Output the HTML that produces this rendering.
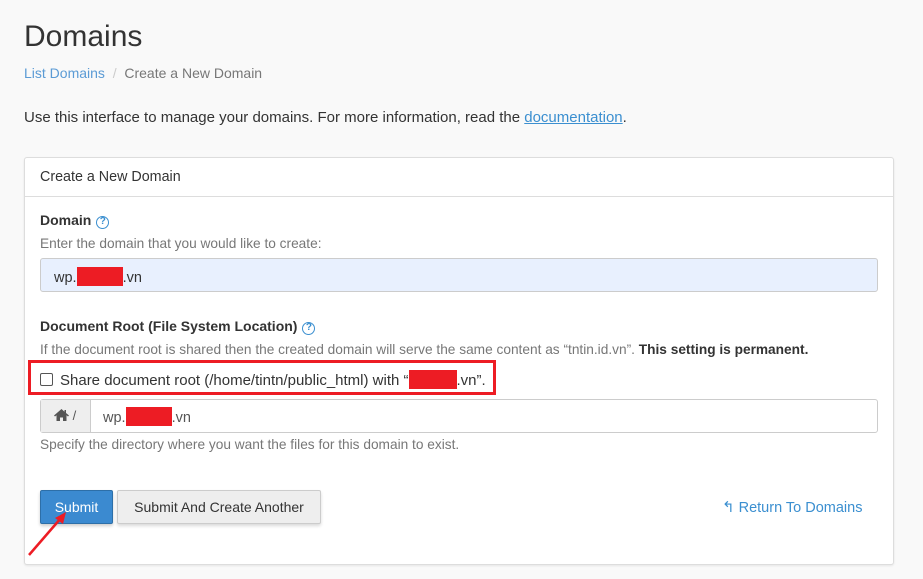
<!DOCTYPE html>
<html><head><meta charset="utf-8"><style>
*{box-sizing:border-box;margin:0;padding:0}
body{width:923px;height:579px;background:#f9f9f9;font-family:"Liberation Sans",sans-serif;color:#333;position:relative;overflow:hidden}
.a{position:absolute;white-space:nowrap}
.q{display:inline-block;width:13px;height:13px;border:1.5px solid #3b8fd0;border-radius:50%;color:#3b8fd0;font-size:10px;line-height:10px;text-align:center;font-weight:bold;vertical-align:1px;margin-left:5px}
.red{display:inline-block;background:#ed1c24;height:19px;vertical-align:-4px}
</style></head><body>
<div class="a" style="left:24px;top:20px;font-size:30px;color:#333">Domains</div>
<div class="a" style="left:24px;top:65px;font-size:14px;color:#777"><span style="color:#5b9bd5">List Domains</span> <span style="color:#ccc">&nbsp;/&nbsp;</span> Create a New Domain</div>
<div class="a" style="left:24px;top:109px;font-size:15px;color:#333">Use this interface to manage your domains. For more information, read the <span style="color:#3b8fd0;text-decoration:underline">documentation</span>.</div>
<div class="a" style="left:24px;top:157px;width:870px;height:408px;background:#fff;border:1px solid #ddd;border-radius:3px;box-shadow:0 1px 2px rgba(0,0,0,.08)"></div>
<div class="a" style="left:25px;top:196px;width:868px;border-top:1px solid #ddd"></div>
<div class="a" style="left:40px;top:169px;font-size:14.3px;color:#333">Create a New Domain</div>
<div class="a" style="left:40px;top:212px;font-size:14px;font-weight:bold;color:#333">Domain<span class="q">?</span></div>
<div class="a" style="left:40px;top:236px;font-size:13.7px;color:#777">Enter the domain that you would like to create:</div>
<div class="a" style="left:40px;top:258px;width:838px;height:34px;background:#e8f0fe;border:1px solid #ccc;border-radius:3px;font-size:14.5px;padding:8px 13px">wp.<span class="red" style="width:46px"></span>.vn</div>
<div class="a" style="left:40px;top:318px;font-size:14px;font-weight:bold;color:#333">Document Root (File System Location)<span class="q">?</span></div>
<div class="a" style="left:40px;top:342px;font-size:13.7px;color:#777">If the document root is shared then the created domain will serve the same content as “tntin.id.vn”. <b style="color:#333">This setting is permanent.</b></div>
<div class="a" style="left:28px;top:360px;width:468px;height:35px;border:3px solid #ed1c24"></div>
<div class="a" style="left:40px;top:373px;width:13px;height:13px;border:1px solid #555;border-radius:2px;background:#fff"></div>
<div class="a" style="left:60px;top:370px;font-size:15px;color:#333">Share document root (/home/tintn/public_html) with “<span class="red" style="width:48px"></span>.vn”.</div>
<div class="a" style="left:40px;top:399px;width:838px;height:34px;border:1px solid #ccc;border-radius:3px;background:#fff"></div>
<div class="a" style="left:41px;top:400px;width:50px;height:32px;background:#eee;border-right:1px solid #ccc;font-size:13px;color:#555;padding:8px 0 0 13px"><svg width="15" height="12" viewBox="0 0 15 12" style="vertical-align:-1px"><path d="M7.5 0L0 6.5 1 7.5 2.5 6.2V12H6V8.5H9V12H12.5V6.2L14 7.5 15 6.5 12 4V1H10.5V2.7Z" fill="#555"/></svg> /</div>
<div class="a" style="left:103px;top:407px;font-size:14.5px;color:#555">wp.<span class="red" style="width:46px"></span>.vn</div>
<div class="a" style="left:40px;top:437px;font-size:13.7px;color:#777">Specify the directory where you want the files for this domain to exist.</div>
<div class="a" style="left:40px;top:490px;width:73px;height:34px;background:#3b8ad0;border:1px solid #2d6fa8;border-radius:2px;color:#fff;font-size:14px;text-align:center;line-height:32px;box-shadow:0 2px 3px rgba(0,0,0,.2)">Submit</div>
<div class="a" style="left:117px;top:490px;width:204px;height:34px;background:#eee;border:1px solid #ccc;border-radius:2px;color:#333;font-size:14px;text-align:center;line-height:32px;box-shadow:0 2px 3px rgba(0,0,0,.15)">Submit And Create Another</div>
<div class="a" style="left:722px;top:498px;font-size:14.5px;color:#3b8fd0"><span style="font-size:15px">↰</span> Return To Domains</div>
<svg class="a" style="left:26px;top:510px" width="45" height="48"><line x1="3" y1="45" x2="35" y2="8" stroke="#ed1c24" stroke-width="2.5"/><path d="M40 2L29 8 37 14Z" fill="#ed1c24"/></svg>
</body></html>
